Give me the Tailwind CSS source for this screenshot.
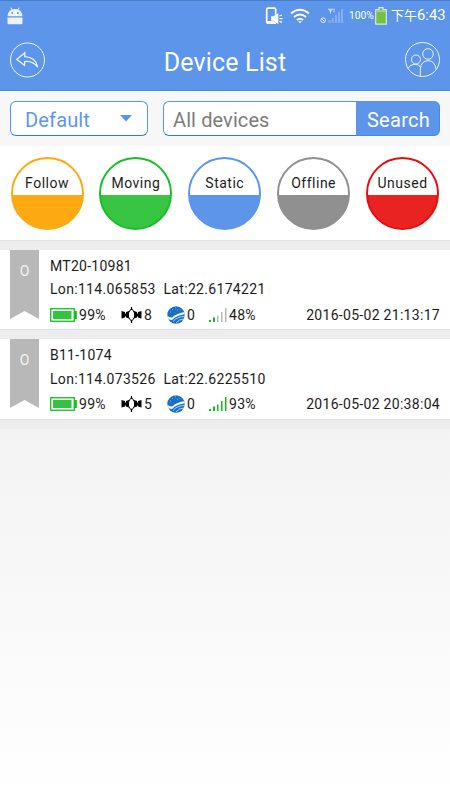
<!DOCTYPE html>
<html lang="en">
<head>
<meta charset="utf-8">
<meta name="viewport" content="width=device-width, initial-scale=1">
<title>Device List</title>
<script src="https://cdn.jsdelivr.net/npm/@tailwindcss/browser@4"></script>
</head>
<body class="w-[450px] h-[800px] overflow-hidden flex flex-col font-[Roboto,'Noto_Sans_CJK_SC',sans-serif] font-normal text-[#1c1c1c] bg-white">
<svg class="absolute w-0 h-0">
  <clipPath id="gc"><circle cx="9" cy="9" r="8.700"/></clipPath>
  <symbol id="battery" viewBox="0 0 27 14"><rect x=".75" y=".75" width="23.5" height="12.5" fill="#fff" stroke="#0bc01a" stroke-width="1.300"/><rect x="3" y="3" width="18.500" height="8" fill="#34c341"/><rect x="24.500" y="3" width="2.300" height="8" fill="#0bc01a"/></symbol>
  <symbol id="satellite" viewBox="0 0 21 18"><path d="M.5 5l3.500 1V7.500h1V6L8 5v7.500l-3-1V10.500H4v1l-3.500 1zM20.500 5L17 6v1.500h-1V6l-3-1v7.500l3-1v-1h1v1l3.500 1z" fill="#000"/><path d="M10.500 1v3M10.500 14v3" stroke="#000" stroke-width="1.200"/><path d="M9.500 3.500h2L13.500 7v4l-2 3.300h-2L7.500 11V7z" fill="#fff" stroke="#000" stroke-width="1"/></symbol>
  <symbol id="globe" viewBox="0 0 18 18"><g clip-path="url(#gc)"><rect width="18" height="18" fill="#1670c3"/><path d="M0 9.500q2.500 2.500 5 2Q10 7 18 6v2.200Q10 9 5 14q-3 0-5-2z" fill="#fff"/><path d="M6 15.500Q10 10.500 18 10.500M9 17q3-4 8-4" fill="none" stroke="#fff" stroke-width=".7"/><path d="M5 3l1 1M10 4h1M8 2h1M3 6h1M12.500 3.500l1 .5" stroke="#9dccf1" stroke-width=".7"/></g></symbol>
</svg>

<header class="h-[91px] shrink-0 bg-[#5c95ea] border-t border-[#4a7cc8] border-b border-b-[#4489ea] text-white">
  <div class="h-[29px] flex items-center pl-[7px] pr-[5px]">
    <svg class="w-4 h-[18px]" viewBox="0 0 16 18" fill="#edf3fd"><path d="M.5 9.300Q.8 4.500 4.500 2.700L3.300.8l.7-.4L5.300 2.300Q8 1.500 10.700 2.300L12 .4l.7.4-1.200 1.900q3.700 1.800 4 6.600zM.5 10.500h15V16q0 1.200-1.200 1.200H1.700Q.5 17.200.5 16z"/><path d="M4.500 5.300h1.500v1.500H4.500zM10 5.300h1.500v1.500H10z" fill="#427bc9"/></svg>
    <div class="ml-auto flex items-center">
      <svg class="w-[18px] h-[18px]" viewBox="0 0 18 18"><rect x="1.700" y="1.200" width="9" height="15" rx="1.500" fill="none" stroke="#fff" stroke-width="1.700"/><path d="M1.500 14h9.500v3H2.500z" fill="#fff"/><path d="M6 9h2.500L13.500 6v11.500L8.500 14H6z" fill="#fff" stroke="#5c95ea" stroke-width=".4"/><path d="M14.500 9l2.500-1M14.500 11.700h3M14.500 14.400l2.500 1" stroke="#fff" stroke-width="1.200"/></svg>
      <svg class="w-[20px] h-[16px] ml-[7px]" viewBox="0 0 20 16" fill="none" stroke="#fff" stroke-width="1.900"><path d="M1 5.500Q10-2 19 5.500M4 9Q10 4 16 9M7 12q3-2.500 6 0"/><path d="M8 13.200h4L10 15.200z" fill="#fff" stroke="none"/></svg>
      <svg class="w-[23px] h-[18px] ml-[10px]" viewBox="0 0 23 18"><path d="M8.500 13h2v3h-2zM11.700 11h2v5h-2zM15 8h2v8h-2zM18 5h2v11h-2zM21 2h2v14h-2z" fill="#86b0ef"/><path d="M8 2.200h5M9.200 2.500l1.300 2.500L11.800 2.500M10.500 2.500v4M14 1.500v4" stroke="#dce9fb" stroke-width=".8" fill="none"/><circle cx="3.200" cy="13.200" r="2.300" fill="none" stroke="#e5effc"/><path d="M1.800 12l3 2.500" stroke="#e5effc"/></svg>
      <span class="ml-[6px] w-[26px] text-[10.300px] leading-[18px] whitespace-nowrap">100%</span>
      <svg class="w-[12px] h-[18px]" viewBox="0 0 12 18"><path d="M4 .7h4v2h3.300v14.500H.7V2.700H4z" fill="#77c043" stroke="#d8e9dc" stroke-width="1.200"/><path d="M1.500 3.500h9V5h-9z" fill="#a8cdb6"/></svg>
      <span class="ml-[4px] w-[54px] text-[14.800px] leading-[18px] whitespace-nowrap"><span class="text-[13px]">下午</span>6:43</span>
    </div>
  </div>
  <div class="h-[60px] flex items-center justify-between px-[9px] pr-[10px]">
    <svg class="w-[37px] h-[37px]" viewBox="0 0 37 37" fill="none" stroke="#edf4ff"><circle cx="18.500" cy="18" r="17"/><path d="M15.800 10.700L7.800 17.500l7.700 5.800.2-3.700q7.800-1.200 13 5.600-1.900-10-12.900-10.500z" stroke-width="1.300"/></svg>
    <h1 class="text-[25px] leading-[34px] pt-[6px] tracking-[0.150px]">Device List</h1>
    <svg class="w-[36px] h-[37px]" viewBox="0 0 36 37" fill="none" stroke="#edf4ff"><circle cx="18.500" cy="17.500" r="17"/><circle cx="24" cy="12" r="5.300"/><circle cx="12" cy="17.500" r="4.500"/><path d="M16.300 34v-7q.7-8.300 8-8.300 6.500 0 7.700 8.300M4 26.500q2-4.200 8-4.200 3 0 4.300 3" /></svg>
  </div>
</header>

<section class="h-[55px] shrink-0 bg-[#f7f7f7] flex items-start pt-[10px] pl-[10px] pr-[10px]">
  <div class="w-[138px] h-[35px] border border-[#5595ed] border-b-[#2b7fdc] rounded-[6px] bg-white flex items-center justify-between pl-[14px] pr-[15px] text-[#5c98ef]">
    <span class="text-[20px] leading-[24px] tracking-[0.150px] pt-[2px]">Default</span>
    <svg class="w-[12px] h-[7px]" viewBox="0 0 12 7" fill="#5595ed"><path d="M0 0h12L6 6.500z"/></svg>
  </div>
  <div class="ml-[15px] w-[193px] h-[35px] border border-r-0 border-[#5595ed] border-b-[#2b7fdc] rounded-l-[6px] bg-white flex items-center pl-[9px] text-[#7c7c7c] text-[20px] leading-[24px] tracking-[0.100px]"><span class="pt-[2px]">All devices</span></div>
  <div class="w-[84px] h-[35px] rounded-r-[6px] bg-[#5c95ea] border-b border-r border-[#4489ea] flex items-center justify-center text-white text-[20px] tracking-[0.300px] leading-[24px]"><span class="pt-[3px] pl-[2px]">Search</span></div>
</section>

<section class="h-[94px] shrink-0 flex justify-between pt-[11px] pl-[10.500px] pr-[11px] text-[14px] tracking-[0.500px]">
  <div class="w-[73px] h-[73px] rounded-full border-2 border-[#fda911] bg-linear-to-b from-white from-[36px] to-[#fda911] to-[36px] text-center leading-[18px] pt-[15px]">Follow</div>
  <div class="w-[73px] h-[73px] rounded-full border-2 border-[#16c125] bg-linear-to-b from-white from-[36px] to-[#37c543] to-[36px] text-center leading-[18px] pt-[15px]">Moving</div>
  <div class="w-[73px] h-[73px] rounded-full border-2 border-[#5c95ea] bg-linear-to-b from-white from-[36px] to-[#5c95ea] to-[36px] text-center leading-[18px] pt-[15px]">Static</div>
  <div class="w-[73px] h-[73px] rounded-full border-2 border-[#909090] bg-linear-to-b from-white from-[36px] to-[#909090] to-[36px] text-center leading-[18px] pt-[15px]">Offline</div>
  <div class="w-[73px] h-[73px] rounded-full border-2 border-[#e60d12] bg-linear-to-b from-white from-[36px] to-[#e92222] to-[36px] text-center leading-[18px] pt-[15px]">Unused</div>
</section>
<div class="h-[10px] shrink-0 bg-[#ededed] border-t border-[#e0e0e0]"></div>

<article class="h-[79px] shrink-0 flex pl-[10px] pr-[10px] text-[14px] leading-[18px]">
  <div class="w-[29px] h-[69px] bg-[#b8b8b8] [clip-path:polygon(0_0,100%_0,100%_100%,50%_61px,0_100%)] text-[#f4f4f4] text-center text-[14px] pt-[12px]">O</div>
  <div class="ml-[11px] flex-1 pt-[7px]">
    <div class="tracking-[0.260px]">MT20-10981</div>
    <div class="mt-[5px] flex tracking-[0.320px]"><span class="w-[113.500px]">Lon:114.065853</span><span>Lat:22.6174221</span></div>
    <div class="mt-[8px] flex items-center whitespace-nowrap tracking-[0.300px]">
      <svg class="w-[27px] h-[14px]"><use href="#battery"/></svg><span class="ml-[2px] w-[42px]">99%</span>
      <svg class="w-[21px] h-[18px]"><use href="#satellite"/></svg><span class="ml-[2px] w-[23px]">8</span>
      <svg class="w-[18px] h-[18px]"><use href="#globe"/></svg><span class="ml-[2px] w-[22px]">0</span>
      <svg class="w-[18px] h-[14px]" viewBox="0 0 18 14"><path d="M0 12h2v2H0zM4 9.500h2V14H4z" fill="#0bc01a"/><path d="M8 7.500h1.500V14H8zM12 4h1.500v10H12zM16 0h1.500v14H16z" fill="#b8b8b8"/></svg><span class="ml-[2px]">48%</span>
      <span class="ml-auto">2016-05-02 21:13:17</span>
    </div>
  </div>
</article>
<div class="h-[10px] shrink-0 bg-[#ededed] border-t border-[#e0e0e0]"></div>

<article class="h-[80px] shrink-0 flex pl-[10px] pr-[10px] text-[14px] leading-[18px]">
  <div class="w-[29px] h-[69px] bg-[#b8b8b8] [clip-path:polygon(0_0,100%_0,100%_100%,50%_61px,0_100%)] text-[#f4f4f4] text-center text-[14px] pt-[12px]">O</div>
  <div class="ml-[11px] flex-1 pt-[7px]">
    <div class="tracking-[0.260px]">B11-1074</div>
    <div class="mt-[6px] flex tracking-[0.320px]"><span class="w-[113.500px]">Lon:114.073526</span><span>Lat:22.6225510</span></div>
    <div class="mt-[7px] flex items-center whitespace-nowrap tracking-[0.300px]">
      <svg class="w-[27px] h-[14px]"><use href="#battery"/></svg><span class="ml-[2px] w-[42px]">99%</span>
      <svg class="w-[21px] h-[18px]"><use href="#satellite"/></svg><span class="ml-[2px] w-[23px]">5</span>
      <svg class="w-[18px] h-[18px]"><use href="#globe"/></svg><span class="ml-[2px] w-[22px]">0</span>
      <svg class="w-[18px] h-[14px]" viewBox="0 0 18 14"><path d="M0 12h2v2H0zM4 9.500h2V14H4zM8 7.500h1.500V14H8zM12 4h1.500v10H12zM16 0h1.500v14H16z" fill="#0bc01a"/></svg><span class="ml-[2px]">93%</span>
      <span class="ml-auto">2016-05-02 20:38:04</span>
    </div>
  </div>
</article>
<div class="h-[10px] shrink-0 bg-[#ededed] border-t border-[#e0e0e0]"></div>
<div class="flex-1 bg-linear-to-b from-[#f3f3f3] to-white"></div>
</body>
</html>
